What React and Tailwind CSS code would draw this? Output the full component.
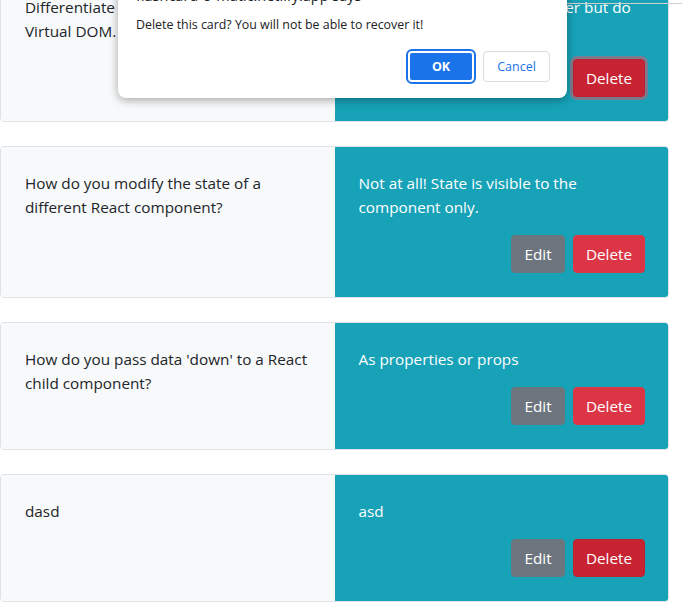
import React from 'react';

const cards = [
  {
    id: 1,
    front: 'Differentiate between Real DOM and Virtual DOM.',
    back: 'Virtual DOM updates are faster but do not directly update the HTML',
    deleteState: 'focus',
  },
  {
    id: 2,
    front: 'How do you modify the state of a different React component?',
    back: 'Not at all! State is visible to the component only.',
  },
  {
    id: 3,
    front: "How do you pass data 'down' to a React child component?",
    back: 'As properties or props',
  },
  { id: 4, front: 'dasd', back: 'asd', deleteState: 'hover' },
];

function Card({ card }) {
  const deleteClass =
    card.deleteState === 'focus'
      ? 'bg-[#c82333] border-[#bd2130] shadow-[0_0_0_3px_rgba(225,83,97,0.5)]'
      : card.deleteState === 'hover'
        ? 'bg-[#c82333] border-[#bd2130]'
        : 'bg-[#dc3545] border-[#dc3545]';

  return (
    <div className="flex w-[669px] border border-[#dee2e6] rounded overflow-hidden mb-6">
      <div className="w-1/2 bg-[#f8f9fa] p-6 text-[#212529]">
        <p>{card.front}</p>
      </div>
      <div className="w-1/2 bg-[#17a2b8] py-6 pl-6 pr-[23px] text-white">
        <p>{card.back}</p>
        <div className="mt-4 flex justify-end gap-2">
          <button
            type="button"
            className="h-[38px] w-[54px] rounded border border-[#6c757d] bg-[#6c757d] text-white"
          >
            Edit
          </button>
          <button
            type="button"
            className={`h-[38px] w-[72px] rounded border text-white ${deleteClass}`}
          >
            Delete
          </button>
        </div>
      </div>
    </div>
  );
}

export default function App() {
  return (
    <div className="relative h-[616px] overflow-hidden bg-white font-['Segoe_UI','Open_Sans','Noto_Sans',sans-serif] text-[15.3px] leading-6">
      <div className="mt-[-30px]">
        {cards.map((card) => (
          <Card key={card.id} card={card} />
        ))}
      </div>

      <div className="absolute top-[3px] left-[567px] right-0 h-px bg-[#cfcfcf]" />

      {/* browser confirm() dialog */}
      <div className="absolute left-[118px] top-[-34px] w-[449px] bg-white rounded-lg shadow-[0_2px_10px_rgba(0,0,0,0.35)] pl-[18px] pr-[17px] pt-[20px] pb-[16px] text-[#202124]">
        <p className="text-[14.5px] leading-5">flashcard-o-matic.netlify.app says</p>
        <p className="mt-[9px] text-[12.4px] leading-5">
          Delete this card? You will not be able to recover it!
        </p>
        <div className="mt-4 flex justify-end gap-[9px]">
          <button
            type="button"
            className="h-[31px] w-[66px] rounded bg-[#1a73e8] text-white text-[12.5px] font-bold border-2 border-white outline-2 outline-solid outline-[#1a73e8]"
          >
            OK
          </button>
          <button
            type="button"
            className="h-[31px] w-[67px] rounded bg-white border border-[#dadce0] text-[#1a73e8] text-[12.5px]"
          >
            Cancel
          </button>
        </div>
      </div>
    </div>
  );
}
